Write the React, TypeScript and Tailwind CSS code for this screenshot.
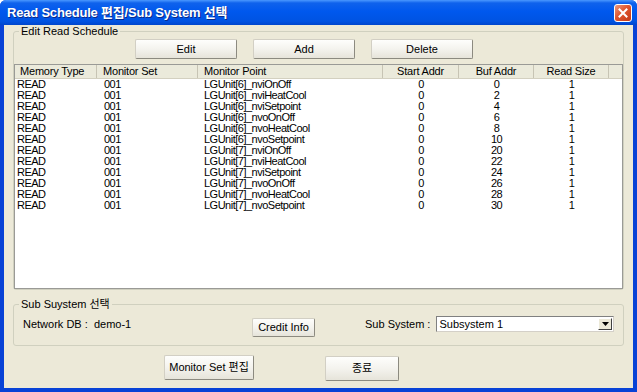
import React from "react";

const rows: [string, string][] = [
  ["LGUnit[6]_nviOnOff", "0"],
  ["LGUnit[6]_nviHeatCool", "2"],
  ["LGUnit[6]_nviSetpoint", "4"],
  ["LGUnit[6]_nvoOnOff", "6"],
  ["LGUnit[6]_nvoHeatCool", "8"],
  ["LGUnit[6]_nvoSetpoint", "10"],
  ["LGUnit[7]_nviOnOff", "20"],
  ["LGUnit[7]_nviHeatCool", "22"],
  ["LGUnit[7]_nviSetpoint", "24"],
  ["LGUnit[7]_nvoOnOff", "26"],
  ["LGUnit[7]_nvoHeatCool", "28"],
  ["LGUnit[7]_nvoSetpoint", "30"],
];

function XpButton({ label, className }: { label: string; className: string }) {
  return (
    <div
      className={
        "flex items-center justify-center rounded-[2px] border border-[#D2CFC4] border-r-[#8C8A80] border-b-[#8C8A80] bg-gradient-to-b from-[#FEFEFC] via-[#F4F3EE] to-[#E6E4DA] text-[11px] leading-[13px] text-black " +
        className
      }
    >
      {label}
    </div>
  );
}

export default function App() {
  return (
    <div className="w-[637px] h-[392px] bg-white font-['Liberation_Sans','Noto_Sans_CJK_KR',sans-serif]">
      <div className="w-[637px] h-[392px] flex flex-col rounded-t-[6px] bg-[#0842D6] overflow-hidden">
        {/* Title bar */}
        <div className="h-[25px] flex items-center justify-between pl-[7px] pr-[5px] bg-[linear-gradient(to_bottom,#4A98FF_0%,#0F62EC_12%,#0058EE_45%,#0053E2_85%,#0046CC_100%)]">
          <span className="text-white font-bold text-[13px] leading-[16px] tracking-[-0.2px] [text-shadow:1px_1px_#0A2A8A] whitespace-nowrap">
            Read Schedule 편집/Sub System 선택
          </span>
          <div className="w-[18px] h-[18px] rounded-[3px] border border-white bg-[linear-gradient(135deg,#EB9A80_0%,#E0552E_45%,#C23A18_100%)] flex items-center justify-center">
            <svg width="10" height="10" viewBox="0 0 10 10">
              <path d="M1.5 1.5 L8.5 8.5 M8.5 1.5 L1.5 8.5" stroke="white" strokeWidth="2" strokeLinecap="square" />
            </svg>
          </div>
        </div>

        {/* Client */}
        <div className="flex-1 mx-[4px] mb-[4px] bg-[#ECE9D8] flex flex-col">
          {/* Group 1 */}
          <fieldset className="mx-[9px] border border-[#D0D0BF] rounded-[3px] flex flex-col">
            <legend className="ml-[5px] px-[2px] text-[11px] leading-[13px] text-black">Edit Read Schedule</legend>
            <div className="flex gap-[16px] pl-[121px] mt-[1px]">
              <XpButton label="Edit" className="w-[102px] h-[20px]" />
              <XpButton label="Add" className="w-[102px] h-[20px]" />
              <XpButton label="Delete" className="w-[102px] h-[20px]" />
            </div>
            {/* List */}
            <div className="mt-[5px] h-[225px] bg-white border border-[#9A9A96] flex flex-col">
              <div className="h-[14px] grid grid-cols-[82px_101px_185px_76px_75px_75px_1fr] bg-[#EBEADB] border-b border-[#D3D0C0] text-[11px] leading-[13px] tracking-[-0.2px] text-black">
                <div className="pl-[5px] border-r border-[#C7C4B4]">Memory Type</div>
                <div className="pl-[6px] border-r border-[#C7C4B4]">Monitor Set</div>
                <div className="pl-[6px] border-r border-[#C7C4B4]">Monitor Point</div>
                <div className="text-center border-r border-[#C7C4B4]">Start Addr</div>
                <div className="text-center border-r border-[#C7C4B4]">Buf Addr</div>
                <div className="text-center border-r border-[#C7C4B4]">Read Size</div>
                <div></div>
              </div>
              <div className="flex flex-col text-[11px] leading-[11px] tracking-[-0.5px] text-black">
                {rows.map(([pt, buf], i) => (
                  <div key={i} className="h-[11px] grid grid-cols-[82px_101px_185px_76px_75px_75px_1fr] whitespace-nowrap">
                    <div className="pl-[2px]">READ</div>
                    <div className="pl-[7px]">001</div>
                    <div className="pl-[6px]">{pt}</div>
                    <div className="text-center">0</div>
                    <div className="text-center">{buf}</div>
                    <div className="text-center">1</div>
                    <div></div>
                  </div>
                ))}
              </div>
            </div>
          </fieldset>

          {/* Group 2 */}
          <fieldset className="mt-[8px] mx-[9px] border border-[#D0D0BF] rounded-[3px] flex flex-col">
            <legend className="ml-[5px] px-[2px] text-[11px] leading-[13px] text-black">Sub Suystem 선택</legend>
            <div className="h-[22px] mt-[4px] mb-[8px] flex text-[11px] leading-[13px] text-black">
              <div className="pl-[9px] w-[238px] mt-[3px] whitespace-pre">Network DB :  demo-1</div>
              <XpButton label="Credit Info" className="w-[63px] h-[19px] self-end" />
              <div className="ml-[50px] mt-[3px] whitespace-pre">Sub System :</div>
              <div className="ml-[6px] mt-[1px] w-[178px] h-[16px] bg-white border border-[#808080] border-r-[#D4D0C8] border-b-[#D4D0C8] flex items-center">
                <div className="flex-1 pl-[2px] leading-[13px]">Subsystem 1</div>
                <div className="w-[14px] h-[12px] mr-[1px] bg-[#ECE9D8] border border-[#FFFFFF] border-r-[#404040] border-b-[#404040] flex items-center justify-center">
                  <svg width="7" height="4" viewBox="0 0 7 4">
                    <path d="M0 0 H7 L3.5 4 Z" fill="black" />
                  </svg>
                </div>
              </div>
            </div>
          </fieldset>

          {/* Bottom buttons */}
          <div className="mt-[9px] flex pl-[160px] gap-[71px]">
            <XpButton label="Monitor Set 편집" className="w-[90px] h-[25px]" />
            <XpButton label="종료" className="w-[74px] h-[25px] mt-[1px]" />
          </div>
        </div>
      </div>
    </div>
  );
}
